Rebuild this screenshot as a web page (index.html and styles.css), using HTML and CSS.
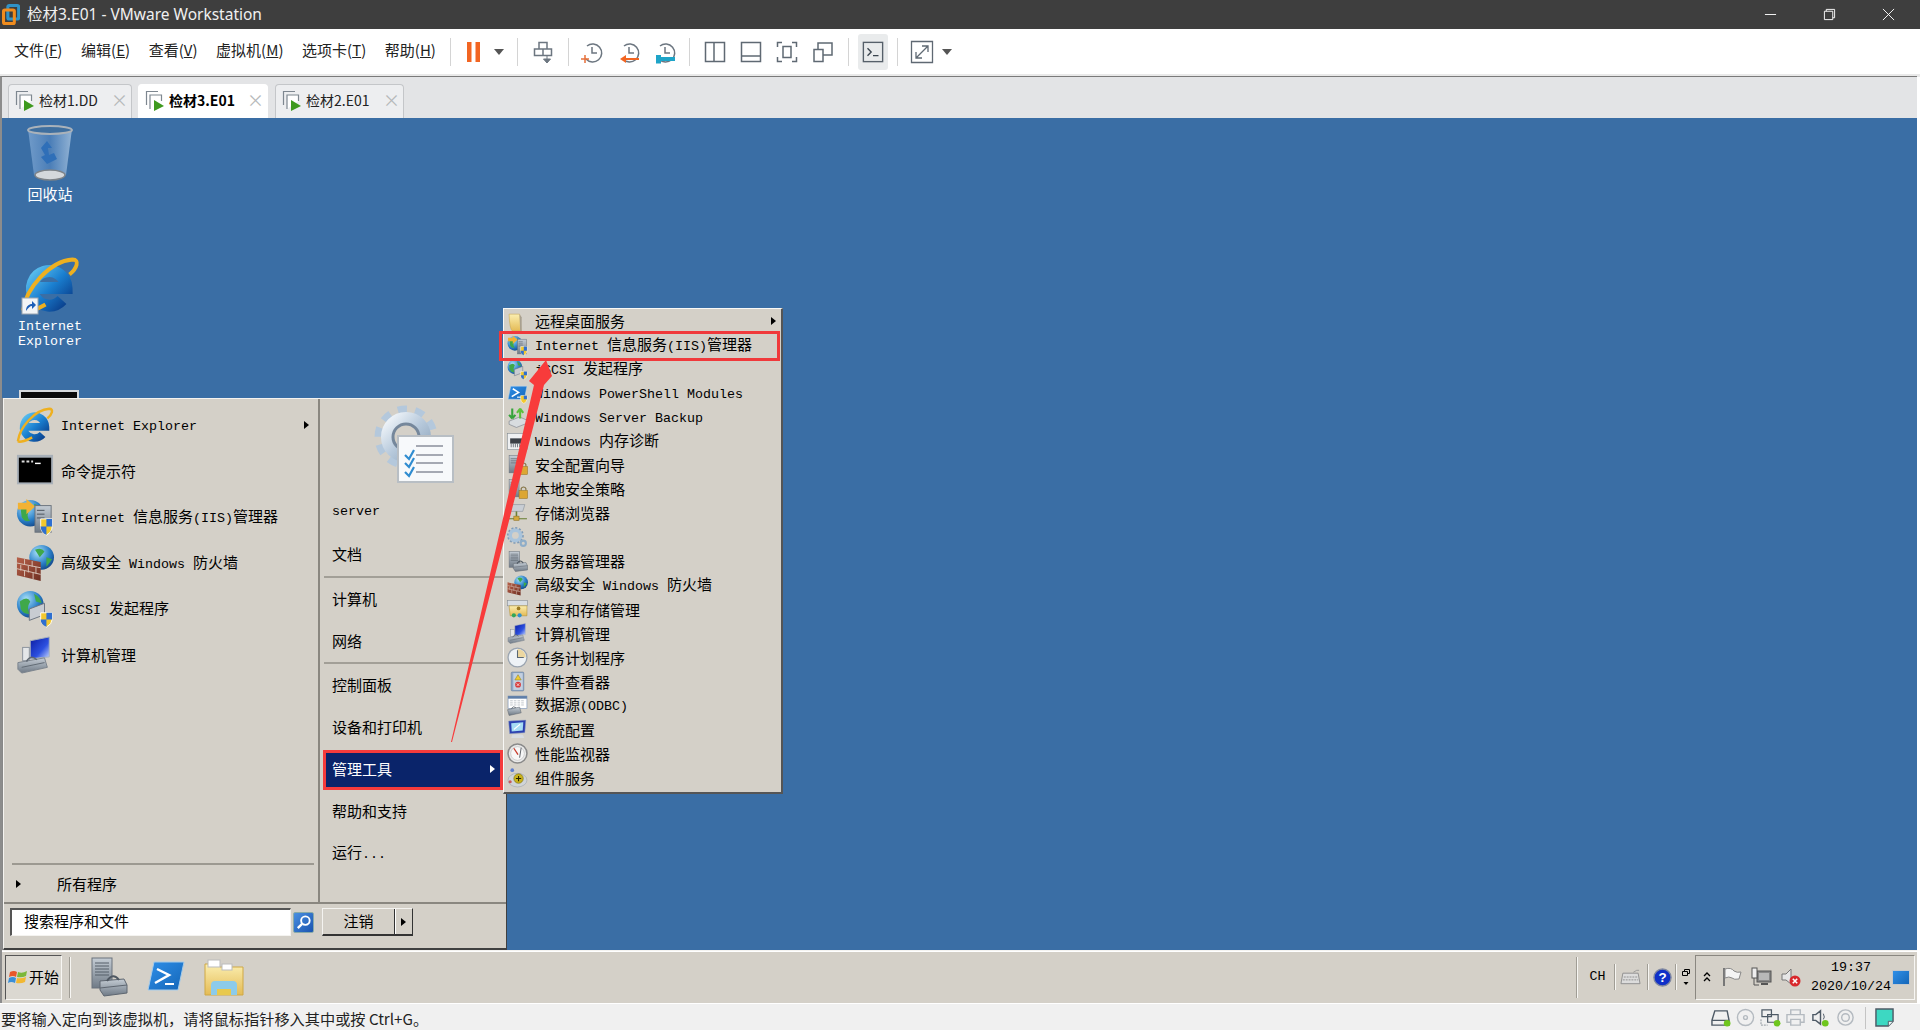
FILE: index.html
```html
<!DOCTYPE html>
<html lang="zh">
<head>
<meta charset="utf-8">
<title>检材3.E01 - VMware Workstation</title>
<link rel="stylesheet" href="styles.css">
</head>
<body>
<svg class="defs" aria-hidden="true">
  <defs>
    <linearGradient id="gBlue" x1="0" y1="0" x2="1" y2="1"><stop offset="0" stop-color="#5cc0ee"/><stop offset=".5" stop-color="#1a7fd0"/><stop offset="1" stop-color="#0a3f8c"/></linearGradient>
    <radialGradient id="gGlobe" cx=".35" cy=".3" r=".8"><stop offset="0" stop-color="#a8e0f8"/><stop offset=".6" stop-color="#2a7fc8"/><stop offset="1" stop-color="#0f3f80"/></radialGradient>
    <linearGradient id="gSteel" x1="0" y1="0" x2="0" y2="1"><stop offset="0" stop-color="#c4ccd4"/><stop offset="1" stop-color="#6f7a86"/></linearGradient>
    <linearGradient id="gBrick" x1="0" y1="0" x2="1" y2="1"><stop offset="0" stop-color="#b8614a"/><stop offset="1" stop-color="#6e2f22"/></linearGradient>
    <linearGradient id="gFolder" x1="0" y1="0" x2="0" y2="1"><stop offset="0" stop-color="#fbeeb0"/><stop offset="1" stop-color="#e4bb55"/></linearGradient>
    <linearGradient id="gScreen" x1="0" y1="0" x2="1" y2="1"><stop offset="0" stop-color="#0a1aa0"/><stop offset=".6" stop-color="#2c50e0"/><stop offset="1" stop-color="#c8d8ff"/></linearGradient>
    <linearGradient id="gBin" x1="0" y1="0" x2="1" y2="0"><stop offset="0" stop-color="#7ea6d2"/><stop offset=".5" stop-color="#4f82bc"/><stop offset="1" stop-color="#a8c4e0"/></linearGradient>
    <linearGradient id="gDesk" x1="0" y1="0" x2="1" y2="1"><stop offset="0" stop-color="#2f8fe8"/><stop offset="1" stop-color="#1466b8"/></linearGradient>
    <linearGradient id="gGear" x1="0" y1="0" x2="1" y2="1"><stop offset="0" stop-color="#f2f6fa"/><stop offset=".5" stop-color="#b8cadc"/><stop offset="1" stop-color="#8fa6be"/></linearGradient>

    <symbol id="i-ie" viewBox="0 0 40 40">
      <path d="M9 22H31A11.500 11.500 0 1 0 28 30" fill="none" stroke="url(#gBlue)" stroke-width="8"/>
      <path d="M2 37C4 22 20 4 35 3C40 3 38 9 33 13M2 37C4 39 12 36 17 33" fill="none" stroke="#eeb020" stroke-width="2.600"/>
    </symbol>
    <symbol id="i-short" viewBox="0 0 18 18">
      <rect x="1" y="1" width="16" height="16" fill="#f2f4f6" stroke="#9aa4b0"/>
      <path d="M5 14C5 9 8 7 11 7V4L15 8L11 12V9C9 9 7 11 5 14Z" fill="#1d5fb8"/>
    </symbol>
    <symbol id="i-bin" viewBox="0 0 46 58">
      <path d="M1 4H45L39 50Q23 58 7 50Z" fill="url(#gBin)" opacity=".8"/>
      <ellipse cx="23" cy="5" rx="22" ry="4" fill="#3f6f9f" stroke="#aab2ba" stroke-width="2"/>
      <path d="M14 23L20 16L25 23L21 23L22 30L27 28L30 34L20 39L14 32L18 30Z" fill="#2f6fb8"/>
      <ellipse cx="23" cy="50" rx="15" ry="5" fill="#d4d8dc" stroke="#7c8288" stroke-width="1.500"/>
    </symbol>
    <symbol id="i-cmd" viewBox="0 0 40 40">
      <rect x="1" y="3" width="38" height="31" fill="#a8b0b8"/>
      <rect x="3" y="6" width="34" height="26" fill="#000"/>
      <path d="M6 10H9M11 10H14M16 10H18" stroke="#ddd" stroke-width="2"/>
      <path d="M20 12H26" stroke="#fff" stroke-width="1.500"/>
    </symbol>
    <symbol id="i-iis" viewBox="0 0 40 40">
      <circle cx="15" cy="16" r="14" fill="url(#gGlobe)"/>
      <path d="M5 12Q12 8 14 13Q10 20 15 24Q9 26 6 20ZM19 6Q26 8 27 15L21 13Z" fill="#3fa84a"/>
      <path d="M2 5H11V1L20 9L11 17V12H2Z" fill="#f2b233"/>
      <rect x="20" y="8" width="17" height="28" fill="url(#gSteel)" stroke="#6a727c"/>
      <path d="M22 13H30M22 17H30M22 21H30" stroke="#4a525c"/>
      <path d="M26 22H38V30Q38 36 32 39Q26 36 26 30Z" fill="#f2c82e" stroke="#fff"/>
      <path d="M32 22H38V30H32ZM26 30H32V39Q26 36 26 30Z" fill="#2e6fd0"/>
    </symbol>
    <symbol id="i-fw" viewBox="0 0 40 40">
      <circle cx="27" cy="14" r="13" fill="url(#gGlobe)"/>
      <path d="M20 6Q27 3 30 8L25 14ZM32 14L38 16L32 24Z" fill="#3fa84a"/>
      <path d="M1 14L26 19V39L1 33Z" fill="url(#gBrick)"/>
      <path d="M1 20L26 25M1 26L26 32M9 16V22M17 18V24M5 22V28M13 23V30M21 24V31M9 28V34M18 30V37" stroke="#d8c4b8" stroke-width="1"/>
    </symbol>
    <symbol id="i-iscsi" viewBox="0 0 40 40">
      <circle cx="15" cy="15" r="14" fill="url(#gGlobe)"/>
      <path d="M4 12Q12 6 15 12Q10 20 15 25Q8 26 5 20ZM19 4Q26 8 27 14L21 12Z" fill="#3fa84a"/>
      <path d="M14 20L30 14V26L14 32Z" fill="#c8ccd2" stroke="#69727e"/>
      <path d="M26 24H38V31Q38 36 32 39Q26 36 26 31Z" fill="#f2c82e" stroke="#fff"/>
      <path d="M32 24H38V31H32ZM26 31H32V39Q26 36 26 31Z" fill="#2e6fd0"/>
    </symbol>
    <symbol id="i-cm" viewBox="0 0 40 40">
      <path d="M15 5L35 1V22L15 24Z" fill="url(#gScreen)" stroke="#a8b2bc"/>
      <rect x="7" y="12" width="7" height="14" fill="#e4e6e8" stroke="#8a929c"/>
      <path d="M2 28L30 23L33 33L6 39L2 35Z" fill="url(#gSteel)" stroke="#7a838c"/>
      <path d="M11 27Q15 19 22 25" fill="none" stroke="#5f6872" stroke-width="1.600"/>
      <path d="M6 33L30 28" stroke="#5f6872"/>
    </symbol>
    <symbol id="i-folder" viewBox="0 0 40 40">
      <path d="M4 6H24L27 38H10Q5 34 4 6Z" fill="url(#gFolder)" stroke="#c8a548" stroke-width="1"/>
      <path d="M24 6L28 12V38H25Z" fill="#a8a090"/>
    </symbol>
    <symbol id="i-ps" viewBox="0 0 40 40">
      <path d="M7 6H38L33 31H2Z" fill="url(#gDesk)" stroke="#bcd8f0"/>
      <path d="M11 11L22 18L9 26" fill="none" stroke="#fff" stroke-width="3"/>
      <path d="M19 27H30" stroke="#fff" stroke-width="2"/>
      <path d="M26 24H38V31Q38 36 32 39Q26 36 26 31Z" fill="#f2c82e" stroke="#fff"/>
      <path d="M32 24H38V31H32Z" fill="#2e6fd0"/>
    </symbol>
    <symbol id="i-wsb" viewBox="0 0 40 40">
      <path d="M4 27L24 19L38 25V31L18 39L4 33Z" fill="#d8dcdf" stroke="#69727e"/>
      <path d="M10 3V22M10 22L4 15M10 22L16 15" fill="none" stroke="#37a33c" stroke-width="4"/>
      <path d="M25 22V5M25 3L19 11M25 3L31 11" fill="none" stroke="#5cbf3e" stroke-width="4"/>
    </symbol>
    <symbol id="i-mem" viewBox="0 0 40 40">
      <rect x="1" y="5" width="38" height="30" fill="#eef0f2" stroke="#7c8690"/>
      <path d="M6 14H36V24H6Z" fill="#3a3f46"/>
      <path d="M8 24V31M12 24V31M16 24V31M20 24V31M24 24V31M28 24V31M32 24V31" stroke="#5a606a" stroke-width="1.500"/>
    </symbol>
    <symbol id="i-sec" viewBox="0 0 40 40">
      <rect x="4" y="1" width="19" height="33" fill="url(#gSteel)" stroke="#6a727c"/>
      <path d="M7 7H20M7 11H20M7 15H20" stroke="#4a525c"/>
      <path d="M27 22V18A5 5 0 0 1 36 18V22" fill="none" stroke="#7c6a38" stroke-width="2"/>
      <rect x="23" y="22" width="16" height="15" fill="#dca632" stroke="#94701e"/>
    </symbol>
    <symbol id="i-store" viewBox="0 0 40 40">
      <path d="M6 3L34 3L30 16L2 16Z" fill="#c9ced4" stroke="#7c8690"/>
      <path d="M18 16V26" stroke="#6b7f35" stroke-width="3"/>
      <path d="M2 30H38" stroke="#6b7f35" stroke-width="2"/>
      <rect x="13" y="25" width="10" height="8" fill="#d4a83a" stroke="#8a6d1e"/>
    </symbol>
    <symbol id="i-gears" viewBox="0 0 40 40">
      <circle cx="16" cy="16" r="10" fill="none" stroke="#a9c4dc" stroke-width="7"/>
      <circle cx="16" cy="16" r="14.500" fill="none" stroke="#7f9cb8" stroke-width="3" stroke-dasharray="4 3.500"/>
      <circle cx="31" cy="31" r="5" fill="none" stroke="#8fadc8" stroke-width="4"/>
    </symbol>
    <symbol id="i-sm" viewBox="0 0 40 40">
      <rect x="4" y="1" width="20" height="30" fill="url(#gSteel)" stroke="#6a727c"/>
      <path d="M7 6H21M7 9H21M7 12H21M7 15H21M7 18H21" stroke="#555e68"/>
      <path d="M12 24L36 22L39 28V36L16 39L12 33Z" fill="url(#gSteel)" stroke="#5e6670"/>
      <path d="M12 31L39 28" stroke="#5e6670"/>
      <path d="M19 24Q25 15 31 23" fill="none" stroke="#4f5862" stroke-width="2"/>
    </symbol>
    <symbol id="i-share" viewBox="0 0 40 40">
      <rect x="1" y="3" width="38" height="10" fill="#d8dee4" stroke="#7c8690"/>
      <path d="M4 13H38V32H6Z" fill="url(#gFolder)" stroke="#b08d2e"/>
      <circle cx="13" cy="31" r="4" fill="#2fa75a"/><circle cx="24" cy="31" r="4" fill="#2f8fd0"/>
      <circle cx="22" cy="18" r="3.500" fill="#9a7a22"/>
    </symbol>
    <symbol id="i-clock" viewBox="0 0 40 40">
      <circle cx="20" cy="20" r="18" fill="#eef2f6" stroke="#9aa4b0" stroke-width="2.500"/>
      <path d="M20 20V4A16 16 0 0 1 36 20Z" fill="#ecd7a0"/>
      <path d="M20 6V20H32" fill="none" stroke="#5a6874" stroke-width="2"/>
    </symbol>
    <symbol id="i-event" viewBox="0 0 40 40">
      <rect x="8" y="2" width="24" height="36" rx="2" fill="#8ea8c8" stroke="#5f7390"/>
      <rect x="12" y="4" width="18" height="32" fill="#c4d0e0"/>
      <path d="M21 7L27 17H15Z" fill="#f2cc30" stroke="#8a7a20"/>
      <circle cx="21" cy="26" r="5.500" fill="#d83a3a"/>
      <path d="M18.500 23.500L23.500 28.500M23.500 23.500L18.500 28.500" stroke="#fff" stroke-width="1.400"/>
    </symbol>
    <symbol id="i-odbc" viewBox="0 0 40 40">
      <rect x="2" y="2" width="36" height="24" fill="#fff" stroke="#5f7ea8"/>
      <rect x="2" y="2" width="36" height="5" fill="#5f7ea8"/>
      <path d="M6 11H34M6 15H34M6 19H34" stroke="#8a949e" stroke-dasharray="5 2"/>
      <path d="M1 28L24 23L27 34L4 39Z" fill="url(#gSteel)" stroke="#5e6670"/>
      <path d="M8 26Q12 20 17 24" fill="none" stroke="#5e6670" stroke-width="1.600"/>
    </symbol>
    <symbol id="i-conf" viewBox="0 0 40 40">
      <path d="M3 4L36 2L34 26L5 28Z" fill="#2a3fb0" stroke="#9aa6c0"/>
      <path d="M8 8L31 6L30 22L9 24Z" fill="#a6dcf4"/>
      <path d="M13 20L25 10" stroke="#fff" stroke-width="2"/>
      <path d="M10 30Q20 28 30 30L33 36H8Z" fill="#d8dce0"/>
    </symbol>
    <symbol id="i-perf" viewBox="0 0 40 40">
      <circle cx="20" cy="20" r="18" fill="#eaeaea" stroke="#8a8a8a" stroke-width="3"/>
      <circle cx="20" cy="20" r="13" fill="#f7f7f7" stroke="#b0b0b0"/>
      <path d="M13 10L21 22" stroke="#c83a2a" stroke-width="2.500"/>
      <path d="M27 9L24 28" stroke="#3a3f46" stroke-width="1.500"/>
    </symbol>
    <symbol id="i-com" viewBox="0 0 40 40">
      <ellipse cx="20" cy="25" rx="18" ry="13" fill="#d0d4d8" stroke="#9aa0a6"/>
      <circle cx="22" cy="22" r="9" fill="#c9b21c" stroke="#6c5f10"/>
      <path d="M22 17V27M17 22H27" stroke="#2a2400" stroke-width="2"/>
      <circle cx="10" cy="6" r="3.500" fill="#5f7fd0"/><circle cx="6" cy="28" r="3" fill="#c85a5a"/>
    </symbol>
    <symbol id="i-tabvm" viewBox="0 0 22 22">
      <path d="M2.500 16V2.500H14" fill="none" stroke="#7e8790" stroke-width="1.200"/>
      <path d="M6 20V6H17.500V12" fill="#fff" stroke="#7e8790" stroke-width="1.200"/>
      <path d="M10 11L20 17L10 22Z" fill="#3e9a1e"/>
    </symbol>
    <symbol id="i-snap" viewBox="0 0 24 24">
      <path d="M7 6A9 9 0 1 1 6 19" fill="none" stroke="#6c7680" stroke-width="1.500"/>
      <path d="M12 7V13H17" fill="none" stroke="#6c7680" stroke-width="1.500"/>
    </symbol>
  </defs>
</svg>

<header class="titlebar">
  <svg class="applogo" viewBox="0 0 20 24"><rect x="6.500" y="2" width="12" height="15" rx="1.500" fill="none" stroke="#2f93c8" stroke-width="3.400"/><rect x="1.700" y="7" width="12" height="15" rx="1.500" fill="none" stroke="#f08c1e" stroke-width="3.400"/></svg>
  <span class="apptitle">检材3.E01 - VMware Workstation</span>
  <div class="winbtns">
    <svg class="wb" viewBox="0 0 14 14"><path d="M1 7H13" stroke="#fff" stroke-width="1"/></svg>
    <svg class="wb" viewBox="0 0 14 14"><path d="M1.500 3.500H10.500V12.500H1.500ZM3.500 3.500V1.500H12.500V10.500H10.500" fill="none" stroke="#fff"/></svg>
    <svg class="wb" viewBox="0 0 14 14"><path d="M1 1L13 13M13 1L1 13" stroke="#fff"/></svg>
  </div>
</header>

<nav class="toolbar">
  <div class="menubar"><span>文件(<u>F</u>)</span><span>编辑(<u>E</u>)</span><span>查看(<u>V</u>)</span><span>虚拟机(<u>M</u>)</span><span>选项卡(<u>T</u>)</span><span>帮助(<u>H</u>)</span></div>
  <i class="tsep m14"></i>
  <span class="tool m5"><svg viewBox="0 0 24 24"><path d="M5 2H9.500V22H5ZM13.500 2H18V22H13.500Z" fill="#f26522"/></svg></span>
  <span class="caret"></span>
  <i class="tsep m11"></i>
  <span class="tool m7"><svg viewBox="0 0 24 24"><path d="M8 2.500H16V9H8ZM3.500 9H12V15.500H3.500ZM12 9H20.500V15.500H12Z" fill="none" stroke="#6c7680" stroke-width="1.500"/><path d="M16 15V21M12.500 19L16 23L19.500 19Z" fill="#6c7680" stroke="#6c7680"/></svg></span>
  <i class="tsep m7"></i>
  <span class="tool m5"><svg viewBox="0 0 24 24"><use href="#i-snap"/><path d="M1 19H9M5 15V23" stroke="#e8703a" stroke-width="1.500"/></svg></span>
  <span class="tool m1"><svg viewBox="0 0 24 24"><use href="#i-snap"/><path d="M22 18H9V15L3 19L9 23V20H22Z" fill="#f26522"/></svg></span>
  <span class="tool"><svg viewBox="0 0 24 24"><use href="#i-snap"/><path d="M8 17H22V21H8V23.500L3 23.500V15L8 15Z" fill="#1ea4c8"/></svg></span>
  <i class="tsep m6"></i>
  <span class="tool m7"><svg viewBox="0 0 24 24"><path d="M2.500 2.500H21.500V21.500H2.500ZM11 2.500V21.500" fill="none" stroke="#5f6973" stroke-width="1.500"/></svg></span>
  <span class="tool"><svg viewBox="0 0 24 24"><path d="M2.500 2.500H21.500V21.500H2.500ZM2.500 16H21.500" fill="none" stroke="#5f6973" stroke-width="1.500"/></svg></span>
  <span class="tool"><svg viewBox="0 0 24 24"><path d="M2.500 7V2.500H7M17 2.500H21.500V7M21.500 17V21.500H17M7 21.500H2.500V17M8 6.500H16V17.500H8Z" fill="none" stroke="#5f6973" stroke-width="1.500"/></svg></span>
  <span class="tool"><svg viewBox="0 0 24 24"><path d="M3 9.500H12V21.500H3ZM7 9.500V3H21V15H12" fill="none" stroke="#5f6973" stroke-width="1.500"/></svg></span>
  <i class="tsep m7"></i>
  <span class="tool console m9"><svg viewBox="0 0 24 24"><rect x="1.500" y="1.500" width="21" height="21" fill="none" stroke="#56606a" stroke-width="1.500"/><path d="M6 8L10 12L6 16M12 16H18" fill="none" stroke="#3a444e" stroke-width="1.500"/></svg></span>
  <i class="tsep m9"></i>
  <span class="tool m6"><svg viewBox="0 0 24 24"><path d="M1.500 1.500H22.500V22.500H1.500ZM6 18L18 6M12 6H18V12M6 12V18H12" fill="none" stroke="#5f6973" stroke-width="1.300"/></svg></span>
  <span class="caret"></span>
</nav>

<main class="frame">
  <div class="tabs">
    <div class="tab t1"><svg class="tabic"><use href="#i-tabvm"/></svg><span class="tabname">检材1.DD</span><span class="tabx">×</span></div>
    <div class="tab active t2"><svg class="tabic"><use href="#i-tabvm"/></svg><span class="tabname">检材3.E01</span><span class="tabx">×</span></div>
    <div class="tab t3"><svg class="tabic"><use href="#i-tabvm"/></svg><span class="tabname">检材2.E01</span><span class="tabx">×</span></div>
  </div>

  <section class="desktop">
    <div class="dicon d1"><svg class="bin"><use href="#i-bin"/></svg><span class="dlabel">回收站</span></div>
    <div class="dicon d2">
      <span class="ieic"><svg class="iesvg"><use href="#i-ie"/></svg><svg class="shortcut"><use href="#i-short"/></svg></span>
      <span class="dlabel two"><span class="l">Internet</span><span class="l">Explorer</span></span>
    </div>
    <div class="sliver"></div>

    <div class="startmenu">
      <div class="smtop">
        <div class="smleft">
          <ul class="pinned">
            <li><svg class="ic38"><use href="#i-ie"/></svg><span><span class="l">Internet Explorer</span></span><b class="arr"></b></li>
            <li><svg class="ic38"><use href="#i-cmd"/></svg><span>命令提示符</span></li>
            <li><svg class="ic38"><use href="#i-iis"/></svg><span><span class="l">Internet </span>信息服务<span class="l">(IIS)</span>管理器</span></li>
            <li><svg class="ic38"><use href="#i-fw"/></svg><span>高级安全<span class="l"> Windows </span>防火墙</span></li>
            <li><svg class="ic38"><use href="#i-iscsi"/></svg><span><span class="l">iSCSI </span>发起程序</span></li>
            <li><svg class="ic38"><use href="#i-cm"/></svg><span>计算机管理</span></li>
          </ul>
          <div class="allprog"><b class="arr small"></b><span>所有程序</span></div>
        </div>
        <div class="smright">
          <div class="avatar">
            <svg class="gear" viewBox="0 0 80 78">
              <circle cx="32" cy="32" r="27" fill="none" stroke="#b4c8dc" stroke-width="9" stroke-dasharray="9 7.960"/>
              <circle cx="32" cy="32" r="19" fill="none" stroke="url(#gGear)" stroke-width="12"/>
              <circle cx="32" cy="32" r="13" fill="none" stroke="#75879b" stroke-width="3"/>
              <rect x="24" y="31" width="55" height="46" fill="#f7f9fb" stroke="#b8bec4" stroke-width="2"/>
              <path d="M42 41H69M42 50H69M42 58H69M42 67H69" stroke="#8a8e9c" stroke-width="1.300"/>
              <path d="M31 50L35 54L40 45M31 58L35 62L40 53M31 67L35 71L40 62" fill="none" stroke="#2f8cd0" stroke-width="2.200"/>
            </svg>
          </div>
          <div class="rrow"><span class="l">server</span></div>
          <div class="rrow">文档</div>
          <hr class="rsep">
          <div class="rrow">计算机</div>
          <div class="rrow">网络</div>
          <hr class="rsep b">
          <div class="rrow">控制面板</div>
          <div class="rrow">设备和打印机</div>
          <div class="rrow hi"><span>管理工具</span><b class="arr white"></b></div>
          <div class="rrow">帮助和支持</div>
          <div class="rrow"><span>运行<span class="l">...</span></span></div>
        </div>
      </div>
      <div class="smbottom">
        <div class="searchbox">搜索程序和文件</div>
        <div class="searchbtn"><svg viewBox="0 0 20 20"><circle cx="12" cy="8" r="4.500" fill="none" stroke="#fff" stroke-width="2"/><path d="M8.500 11.500L4 16" stroke="#fff" stroke-width="2.500"/></svg></div>
        <div class="logoff"><span class="logoffl">注销</span><span class="logoffr"><b class="arr"></b></span></div>
      </div>
    </div>

    <div class="flyout">
      <div class="frow"><svg class="ic22"><use href="#i-folder"/></svg><span>远程桌面服务</span><b class="arr"></b></div>
      <div class="frow"><svg class="ic22"><use href="#i-iis"/></svg><span><span class="l">Internet </span>信息服务<span class="l">(IIS)</span>管理器</span></div>
      <div class="frow"><svg class="ic22"><use href="#i-iscsi"/></svg><span><span class="l">iSCSI </span>发起程序</span></div>
      <div class="frow"><svg class="ic22"><use href="#i-ps"/></svg><span><span class="l">Windows PowerShell Modules</span></span></div>
      <div class="frow"><svg class="ic22"><use href="#i-wsb"/></svg><span><span class="l">Windows Server Backup</span></span></div>
      <div class="frow"><svg class="ic22"><use href="#i-mem"/></svg><span><span class="l">Windows </span>内存诊断</span></div>
      <div class="frow"><svg class="ic22"><use href="#i-sec"/></svg><span>安全配置向导</span></div>
      <div class="frow"><svg class="ic22"><use href="#i-sec"/></svg><span>本地安全策略</span></div>
      <div class="frow"><svg class="ic22"><use href="#i-store"/></svg><span>存储浏览器</span></div>
      <div class="frow"><svg class="ic22"><use href="#i-gears"/></svg><span>服务</span></div>
      <div class="frow"><svg class="ic22"><use href="#i-sm"/></svg><span>服务器管理器</span></div>
      <div class="frow"><svg class="ic22"><use href="#i-fw"/></svg><span>高级安全<span class="l"> Windows </span>防火墙</span></div>
      <div class="frow"><svg class="ic22"><use href="#i-share"/></svg><span>共享和存储管理</span></div>
      <div class="frow"><svg class="ic22"><use href="#i-cm"/></svg><span>计算机管理</span></div>
      <div class="frow"><svg class="ic22"><use href="#i-clock"/></svg><span>任务计划程序</span></div>
      <div class="frow"><svg class="ic22"><use href="#i-event"/></svg><span>事件查看器</span></div>
      <div class="frow"><svg class="ic22"><use href="#i-odbc"/></svg><span>数据源<span class="l">(ODBC)</span></span></div>
      <div class="frow"><svg class="ic22"><use href="#i-conf"/></svg><span>系统配置</span></div>
      <div class="frow"><svg class="ic22"><use href="#i-perf"/></svg><span>性能监视器</span></div>
      <div class="frow"><svg class="ic22"><use href="#i-com"/></svg><span>组件服务</span></div>
    </div>

    <div class="redbox"></div>
    <svg class="redarrow" viewBox="0 0 120 400"><polygon points="1,392 84,35 79,31 96,10 102,26 94,35 2,392" fill="#f83b3b"/></svg>
  </section>

  <footer class="taskbar">
    <div class="startbtn"><svg class="winlogo" viewBox="0 0 20 20"><path d="M2 5Q6 3 9 5L8 10Q5 8 1 10Z" fill="#e8582a"/><path d="M10 5Q14 7 19 4L18 9Q14 11 9 10Z" fill="#7cb83a"/><path d="M1 11Q5 9 8 11L7 16Q3 14 0 16Z" fill="#3a8fd8"/><path d="M9 11Q13 12 18 10L17 15Q13 17 8 16Z" fill="#f2b832"/></svg><span>开始</span></div>
    <i class="tbsep first"></i>
    <svg class="quick q1"><use href="#i-sm"/></svg>
    <svg class="quick q2" viewBox="0 0 40 34"><path d="M8 2H38L32 30H2Z" fill="url(#gDesk)" stroke="#a6ccea"/><path d="M11 9L23 15L9 23" fill="none" stroke="#fff" stroke-width="2.500"/><path d="M19 24H28" stroke="#fff" stroke-width="2"/></svg>
    <svg class="quick q3" viewBox="0 0 40 40"><path d="M1 7H13L16 10H39V38H1Z" fill="url(#gFolder)" stroke="#cfa845"/><rect x="4" y="3" width="12" height="7" fill="#fff" stroke="#bbb"/><rect x="18" y="7" width="10" height="6" fill="#fff" stroke="#bbb"/><path d="M7 38V28Q7 24 11 24H29Q33 24 33 28V38H27V32H13V38Z" fill="#8ccbea"/><rect x="13" y="32" width="14" height="6" fill="#e8c94e"/></svg>
    <div class="tbright">
      <i class="tbsep"></i>
      <span class="ch">CH</span>
      <i class="tbsep thin"></i>
      <svg class="kb" viewBox="0 0 22 18"><path d="M14 4Q18 1 20 2" fill="none" stroke="#999"/><path d="M3 5H19L21 16H1Z" fill="#dcdcdc" stroke="#8f8f8f"/><path d="M4 9H18M3 12H19" stroke="#8f8f8f" stroke-dasharray="2 1"/></svg>
      <i class="tbsep thin"></i>
      <svg class="help" viewBox="0 0 20 20"><circle cx="10" cy="10" r="9" fill="#1030c8" stroke="#8088a0" stroke-width="1.500"/><text x="10" y="15" class="helpq">?</text></svg>
      <i class="tbsep thin"></i>
      <svg class="mini" viewBox="0 0 8 20"><path d="M0.500 4.500H5.500V8.500H0.500ZM2.500 4.500V2.500H7.500V6.500H5.500" fill="none" stroke="#000"/><path d="M1.500 15H6.500L4 18Z" fill="#000"/></svg>
      <div class="tray">
        <svg class="chev" viewBox="0 0 8 10"><path d="M1 4L4 1L7 4M1 9L4 6L7 9" fill="none" stroke="#000" stroke-width="1.300"/></svg>
        <svg class="flag" viewBox="0 0 20 20"><path d="M2 1V19" stroke="#777" stroke-width="2"/><path d="M3 2Q9 0 12 4Q15 6 19 5L17 12Q12 13 10 11Q7 9 3 11Z" fill="#f4f4f4" stroke="#888"/></svg>
        <svg class="net" viewBox="0 0 21 20"><rect x="6" y="4" width="14" height="11" fill="#888" stroke="#555"/><rect x="8" y="6" width="10" height="7" fill="#b8b8b8"/><path d="M10 17H17" stroke="#555" stroke-width="2"/><rect x="1" y="1" width="5" height="10" fill="#eee" stroke="#555"/><path d="M3 11V18H8" fill="none" stroke="#555"/></svg>
        <svg class="spk" viewBox="0 0 20 20"><path d="M1 7H5L10 2V17L5 13H1Z" fill="#e6e6e6" stroke="#777"/><circle cx="14" cy="14" r="5.500" fill="#d8282c"/><path d="M11.800 11.800L16.200 16.200M16.200 11.800L11.800 16.200" stroke="#fff" stroke-width="1.600"/></svg>
        <div class="clock"><span>19:37</span><span>2020/10/24</span></div>
        <div class="showdesk"></div>
      </div>
    </div>
  </footer>
</main>

<footer class="status">
  <span class="stext">要将输入定向到该虚拟机，请将鼠标指针移入其中或按 Ctrl+G。</span>
  <div class="sicons">
    <svg class="si" viewBox="0 0 22 20"><path d="M5 3H18L20 13V18H2V13ZM2 13H20" fill="none" stroke="#4e5a66" stroke-width="1.500"/><circle cx="18" cy="16" r="3.500" fill="#6fc61e"/></svg>
    <svg class="si" viewBox="0 0 22 20"><circle cx="11" cy="10" r="8.500" fill="none" stroke="#b4bac0" stroke-width="1.500"/><circle cx="11" cy="10" r="2" fill="none" stroke="#b4bac0" stroke-width="1.500"/></svg>
    <svg class="si" viewBox="0 0 22 20"><path d="M2 2H12V9H2ZM8 7H19V15H8Z" fill="#f0f0f0" stroke="#4e5a66" stroke-width="1.300"/><path d="M1 12V18H8" fill="none" stroke="#8a929a" stroke-dasharray="2 1"/><circle cx="18" cy="16" r="3.500" fill="#6fc61e"/></svg>
    <svg class="si" viewBox="0 0 22 20"><path d="M6 7V2H16V7M6 15H2V7H20V15H16M6 12H16V18H6Z" fill="none" stroke="#b4bac0" stroke-width="1.500"/></svg>
    <svg class="si" viewBox="0 0 22 20"><path d="M3 7H6L11 3V17L6 13H3Z" fill="none" stroke="#4e5a66" stroke-width="1.500"/><path d="M14 6Q16 10 14 12" fill="none" stroke="#4e5a66"/><circle cx="16" cy="16" r="3.500" fill="#6fc61e"/></svg>
    <svg class="si" viewBox="0 0 22 20"><circle cx="11" cy="10" r="8" fill="none" stroke="#b4bac0" stroke-width="1.500"/><circle cx="11" cy="10" r="4" fill="none" stroke="#b4bac0" stroke-width="1.500"/></svg>
    <i class="ssep"></i>
    <svg class="note" viewBox="0 0 20 20"><path d="M1 1H19V14L14 19H1Z" fill="#3dd8c2" stroke="#4e5a66" stroke-width="1.500"/><path d="M14 19V14H19" fill="#e8f8f4" stroke="#4e5a66"/></svg>
  </div>
</footer>
</body>
</html>
```

FILE: styles.css
```css
* { box-sizing: border-box; }
html, body { margin: 0; padding: 0; height: 100%; overflow: hidden; }
body {
  display: flex; flex-direction: column; height: 1030px;
  font-family: "Noto Sans CJK SC", "Noto Sans", sans-serif;
  font-size: 15px; color: #000; background: #fff;
}
ul { list-style: none; margin: 0; padding: 0; }
.defs { position: absolute; width: 0; height: 0; }
.l { font-family: "Liberation Mono", monospace; font-size: 13.33px; white-space: pre; }

/* Title bar */
.titlebar {
  height: 29px; flex: none; background: #3e3e3e; color: #f0f0f0;
  display: flex; align-items: center; padding-left: 2px;
}
.applogo { width: 18px; height: 23px; }
.apptitle { margin-left: 7px; font-family: "Noto Sans", "Noto Sans CJK SC", sans-serif; font-size: 15.5px; line-height: 29px; }
.winbtns { margin-left: auto; display: flex; gap: 46px; padding-right: 25px; }
.wb { width: 13px; height: 13px; display: block; }

/* Toolbar */
.toolbar { height: 48px; flex: none; display: flex; align-items: center; padding: 0 0 0 14px; background: #fff; border-bottom: 3px solid #e9e9e9; }
.menubar { width: 422px; display: flex; justify-content: space-between; font-size: 15px; line-height: 20px; padding-bottom: 3px; font-family: "Noto Sans CJK SC", sans-serif; color: #222; }
.tsep { display: block; width: 1px; height: 28px; background: #d4d4d4; }
.tool { width: 36px; height: 36px; display: flex; align-items: center; justify-content: center; }
.tool svg { width: 24px; height: 24px; }
.console { width: 30px; background: #e9ebec; border-radius: 3px; }
.console svg { width: 22px; height: 22px; }
.caret { width: 14px; display: flex; justify-content: center; }
.caret::after { content: ""; border: 5px solid transparent; border-top: 6px solid #555; border-bottom: 0; }
.m1 { margin-left: 1px; } .m5 { margin-left: 5px; } .m6 { margin-left: 6px; } .m7 { margin-left: 7px; }
.m9 { margin-left: 9px; } .m11 { margin-left: 11px; } .m14 { margin-left: 14px; }

/* Frame */
.frame { flex: 1; min-height: 0; display: flex; flex-direction: column; margin-right: 3px; border-left: 2px solid #8c8c8c; border-top: 1px solid #7a7a7a; margin-top: -1px; }
.tabs { height: 41px; flex: none; background: #e3e4e6; display: flex; align-items: flex-end; padding-left: 6px; }
.tab { height: 34px; display: flex; align-items: center; background: #edeef0; border: 1px solid #c4c6c9; border-bottom: 0; border-radius: 4px 4px 0 0; padding: 0 0 3px 5px; font-size: 14px; position: relative; color: #222; }
.tab.active { background: #fff; border-color: #fff; font-weight: 700; color: #000; }
.t1 { width: 124px; margin-right: 6px; } .t2 { width: 130px; margin-right: 7px; } .t3 { width: 129px; }
.tabic { width: 22px; height: 22px; margin-right: 3px; flex: none; }
.tabname { line-height: 20px; }
.tabx { margin-left: auto; margin-right: 3px; color: #b6b8ba; font-size: 17px; font-weight: 400; line-height: 20px; }

/* Guest desktop */
.desktop { flex: 1; min-height: 0; position: relative; background: #3a6ea5; color: #fff; }
.dicon { position: absolute; left: 8px; width: 80px; display: flex; flex-direction: column; align-items: center; text-align: center; }
.d1 { top: 7px; }
.d2 { top: 137px; }
.bin { width: 46px; height: 58px; display: block; }
.ieic { position: relative; width: 60px; height: 60px; display: block; }
.iesvg { width: 60px; height: 60px; display: block; }
.shortcut { position: absolute; left: 1px; bottom: 0; width: 18px; height: 18px; }
.dlabel { line-height: 15px; margin-top: 3px; font-size: 15px; }
.dlabel.two { display: flex; flex-direction: column; margin-top: 4px; }
.sliver { position: absolute; left: 17px; top: 272px; width: 60px; height: 10px; background: #0a0a0a; border: 2px solid #d6d9dc; border-bottom: 0; }

/* Start menu */
.startmenu {
  position: absolute; left: 1px; top: 280px; width: 504px; height: 552px; color: #000;
  background: #d4d0c8; border: 1px solid #f4f3f0; border-right-color: #404040; border-bottom: 2px solid #404040;
  display: flex; flex-direction: column; box-shadow: -1px 0 0 #888;
}
.smtop { height: 505px; flex: none; display: flex; border-bottom: 2px solid #8a8780; }
.smleft { width: 314px; flex: none; display: flex; flex-direction: column; padding: 3px 0 0 12px; }
.pinned li { height: 46px; display: flex; align-items: center; position: relative; line-height: 18px; }
.ic38 { width: 38px; height: 38px; flex: none; margin-right: 7px; display: block; }
.arr { display: inline-block; width: 0; height: 0; border: 4px solid transparent; border-left: 5px solid #000; border-right: 0; }
.pinned .arr { position: absolute; left: 288px; top: 19px; }
.allprog { margin: auto 4px 0 -4px; height: 39px; border-top: 2px solid #9c9991; display: flex; align-items: center; line-height: 18px; position: relative; }
.allprog .small { margin-left: 4px; }
.allprog span { margin-left: 36px; }
.smright { flex: 1; border-left: 2px solid #8a8780; padding-left: 4px; }
.avatar { height: 92px; display: flex; padding: 6px 0 0 50px; }
.gear { width: 80px; height: 78px; display: block; }
.rrow { height: 42px; display: flex; align-items: center; padding-left: 8px; line-height: 18px; position: relative; }
.rsep { border: 0; height: 2px; margin: 1px 0 0; background: #a29f97; }
.rsep.b { margin-top: 0; }
.rrow.hi { height: 40px; margin: 2px 0 0 -1px; background: #0a246a; color: #fff; border: 3px solid #f53b3b; padding: 0 0 2px 6px; width: 180px; }
.arr.white { border-left-color: #fff; position: absolute; right: 5px; top: 12px; }
.smbottom { flex: 1; display: flex; align-items: flex-start; padding: 4px 0 0 6px; }
.searchbox { width: 281px; height: 28px; background: #fff; border: 1px solid #f4f3f0; border-top: 2px solid #555; border-left: 2px solid #555; padding-left: 12px; line-height: 22px; }
.searchbtn { width: 21px; height: 21px; margin: 4px 0 0 2px; background: linear-gradient(135deg, #4a8fe0, #1a54b0); border: 1px solid #8aa; border-radius: 2px; }
.searchbtn svg { width: 19px; height: 19px; display: block; }
.logoff { margin-left: 8px; height: 28px; display: flex; background: #d4d0c8; border: 1px solid #f4f3f0; border-right: 1px solid #333; border-bottom: 2px solid #333; }
.logoffl { width: 72px; text-align: center; line-height: 24px; border-right: 1px solid #333; }
.logoffr { width: 17px; display: flex; align-items: center; justify-content: center; box-shadow: inset 1px 0 0 #fff; }

/* Flyout */
.flyout {
  position: absolute; left: 501px; top: 190px; width: 280px; height: 486px; color: #000;
  background: #d4d0c8; border: 1px solid #f8f8f6; border-right: 2px solid #555; border-bottom: 2px solid #555;
  padding: 0 0 0 3px; display: grid; grid-auto-rows: 24.05px;
}
.frow { display: flex; align-items: center; line-height: 18px; position: relative; }
.ic22 { width: 21px; height: 21px; margin-right: 7px; flex: none; display: block; }
.frow .arr { position: absolute; right: 5px; top: 8px; }
.redbox { position: absolute; left: 497px; top: 213px; width: 281px; height: 30px; border: 3px solid #f0393b; }
.redarrow { position: absolute; left: 448px; top: 232px; width: 120px; height: 400px; display: block; }

/* Taskbar */
.taskbar { height: 53px; flex: none; background: #d4d0c8; border-top: 1px solid #f4f3f0; display: flex; align-items: center; padding-left: 3px; box-shadow: inset 0 1px 0 #fff; }
.startbtn { width: 57px; height: 45px; display: flex; align-items: center; padding-left: 2px; background: #dbd8d1; border: 1px solid #f7f6f3; border-top: 1px solid #555; border-left: 1px solid #555; font-size: 15px; line-height: 18px; }
.winlogo { width: 20px; height: 20px; margin-right: 1px; }
.tbsep { display: block; width: 2px; height: 41px; background: #f7f6f3; border-left: 1px solid #a09d95; flex: none; }
.tbsep.first { margin-left: 7px; }
.tbsep.thin { height: 26px; }
.quick { display: block; flex: none; }
.q1 { width: 40px; height: 40px; margin-left: 17px; }
.q2 { width: 40px; height: 34px; margin-left: 18px; }
.q3 { width: 40px; height: 40px; margin-left: 18px; }
.tbright { margin-left: auto; display: flex; align-items: center; padding-right: 2px; }
.ch { width: 33px; margin-left: 3px; text-align: center; font-family: "Liberation Mono", monospace; font-size: 13.33px; line-height: 18px; }
.kb { width: 21px; height: 18px; margin: 0 6px 0 4px; }
.help { width: 19px; height: 19px; margin: 0 3px 0 4px; }
.helpq { font-family: "Liberation Sans", sans-serif; font-size: 14px; font-weight: 700; fill: #fff; text-anchor: middle; }
.mini { width: 8px; height: 20px; margin: 0 5px 0 5px; }
.tray { width: 220px; height: 45px; display: flex; align-items: center; border: 1px solid #f7f6f3; border-top-color: #8a8780; border-left-color: #8a8780; padding-left: 7px; }
.chev { width: 8px; height: 10px; }
.flag { width: 20px; height: 20px; margin-left: 11px; }
.net { width: 21px; height: 20px; margin-left: 9px; }
.spk { width: 20px; height: 20px; margin-left: 9px; }
.clock { width: 80px; margin-left: 10px; display: flex; flex-direction: column; align-items: center; font-family: "Liberation Mono", monospace; font-size: 13.33px; line-height: 19px; }
.showdesk { width: 18px; height: 15px; margin-left: 1px; background: linear-gradient(135deg, #2f8fe8, #1466b8); border: 1px solid #c4c8cc; }

/* Status bar */
.status { height: 27px; flex: none; background: #f0f0f0; border-top: 1px solid #fff; display: flex; align-items: center; padding: 1px 0 0 1px; }
.stext { font-size: 15.2px; line-height: 20px; color: #222; white-space: pre; }
.sicons { margin-left: auto; display: flex; align-items: center; gap: 4px; padding-right: 26px; }
.si { width: 21px; height: 19px; display: block; }
.ssep { display: block; width: 1px; height: 22px; background: #c4c4c4; margin: 0 5px; }
.note { width: 19px; height: 19px; display: block; }
```
